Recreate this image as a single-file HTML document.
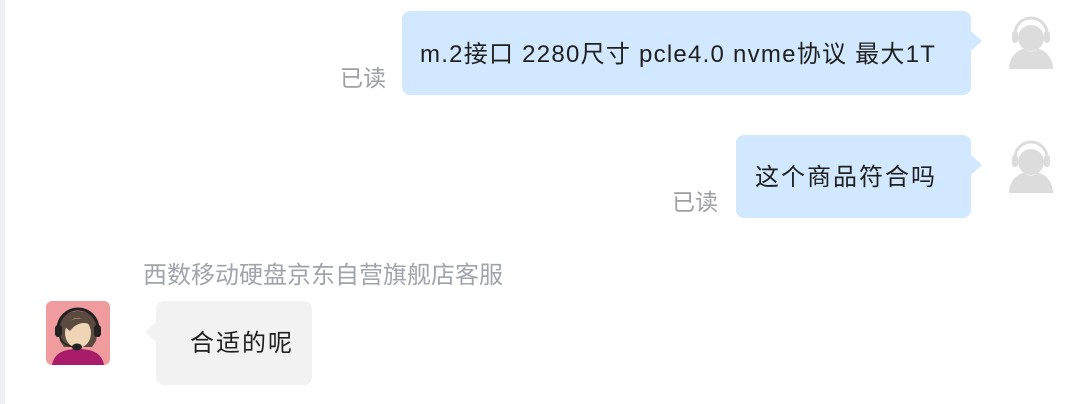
<!DOCTYPE html>
<html><head><meta charset="utf-8"><style>
body{margin:0;width:1092px;height:404px;background:#fff;position:relative;overflow:hidden;font-family:"Liberation Sans","Noto Sans CJK SC",sans-serif;}
.lb{position:absolute;left:0;top:0;width:5px;height:404px;background:#eef0f4}
.b{position:absolute;border-radius:8px;font-size:24px;line-height:28px;letter-spacing:1.25px;color:#1f1f1f;white-space:nowrap;box-sizing:border-box}
.blue{background:#d1e8fe}
.gray{background:#f2f2f3}
.tr{position:absolute;width:0;height:0;border-top:10px solid transparent;border-bottom:10px solid transparent}
.r{position:absolute;font-size:23px;line-height:28px;color:#9c9fa6}
.av{position:absolute;width:48px;height:54px}
</style></head><body>
<div class="lb"></div>

<div class="b blue" style="left:402px;top:11px;width:569px;height:84px;padding:30px 0 0 18px">m.2接口 2280尺寸 pcle4.0 nvme协议 最大1T</div>
<div class="tr" style="left:971px;top:31px;border-left:11px solid #d1e8fe"></div>
<div class="r" style="left:340px;top:64px">已读</div>

<div class="b blue" style="left:736px;top:135px;width:235px;height:83px;padding:29px 0 0 19px;letter-spacing:2px">这个商品符合吗</div>
<div class="tr" style="left:971px;top:155px;border-left:11px solid #d1e8fe"></div>
<div class="r" style="left:672px;top:188px">已读</div>

<svg class="av" style="left:1007px;top:16px" viewBox="0 0 48 54">
<path d="M8 18 A16 16 0 0 1 40 18" fill="none" stroke="#dcdcdc" stroke-width="3"/>
<rect x="5" y="15" width="6" height="12" rx="3" fill="#dcdcdc"/>
<rect x="37" y="15" width="6" height="12" rx="3" fill="#dcdcdc"/>
<circle cx="24" cy="22" r="13" fill="#dcdcdc"/>
<path d="M2 53 C2 40 12 33 17 33 Q24 38 31 33 C36 33 46 40 46 53 Z" fill="#dcdcdc"/>
</svg>
<svg class="av" style="left:1007px;top:140px" viewBox="0 0 48 54">
<path d="M8 18 A16 16 0 0 1 40 18" fill="none" stroke="#dcdcdc" stroke-width="3"/>
<rect x="5" y="15" width="6" height="12" rx="3" fill="#dcdcdc"/>
<rect x="37" y="15" width="6" height="12" rx="3" fill="#dcdcdc"/>
<circle cx="24" cy="22" r="13" fill="#dcdcdc"/>
<path d="M2 53 C2 40 12 33 17 33 Q24 38 31 33 C36 33 46 40 46 53 Z" fill="#dcdcdc"/>
</svg>

<div class="r" style="left:143px;top:262px;font-size:24px;color:#a0a4ad">西数移动硬盘京东自营旗舰店客服</div>

<svg style="position:absolute;left:46px;top:301px" width="64" height="64" viewBox="0 0 64 64">
<rect width="64" height="64" rx="6" fill="#f09b9d"/>
<path d="M6 64 C8 52 18 48 32 48 C46 48 56 52 58 64 Z" fill="#a81c6a"/>
<path d="M14 40 C10 20 18 10 32 10 C46 10 54 20 50 40 L46 46 L18 46 Z" fill="#5a4a40"/>
<ellipse cx="32" cy="32" rx="13" ry="15" fill="#f0d4b6"/>
<path d="M19 26 C22 16 40 14 45 24 C38 20 30 22 24 30 Z" fill="#5a4a40"/>
<path d="M12 28 A20 20 0 0 1 52 28" fill="none" stroke="#222" stroke-width="3"/>
<rect x="9" y="24" width="7" height="12" rx="3" fill="#222"/>
<rect x="48" y="24" width="7" height="12" rx="3" fill="#222"/>
<path d="M14 36 Q16 44 28 46" fill="none" stroke="#222" stroke-width="1.5"/>
<ellipse cx="31" cy="46" rx="5" ry="3.5" fill="#222"/>
</svg>

<div class="b gray" style="left:156px;top:301px;width:156px;height:84px;padding:29px 0 0 34px;letter-spacing:2px">合适的呢</div>
<div class="tr" style="left:145px;top:322px;border-right:11px solid #f2f2f3"></div>
</body></html>
